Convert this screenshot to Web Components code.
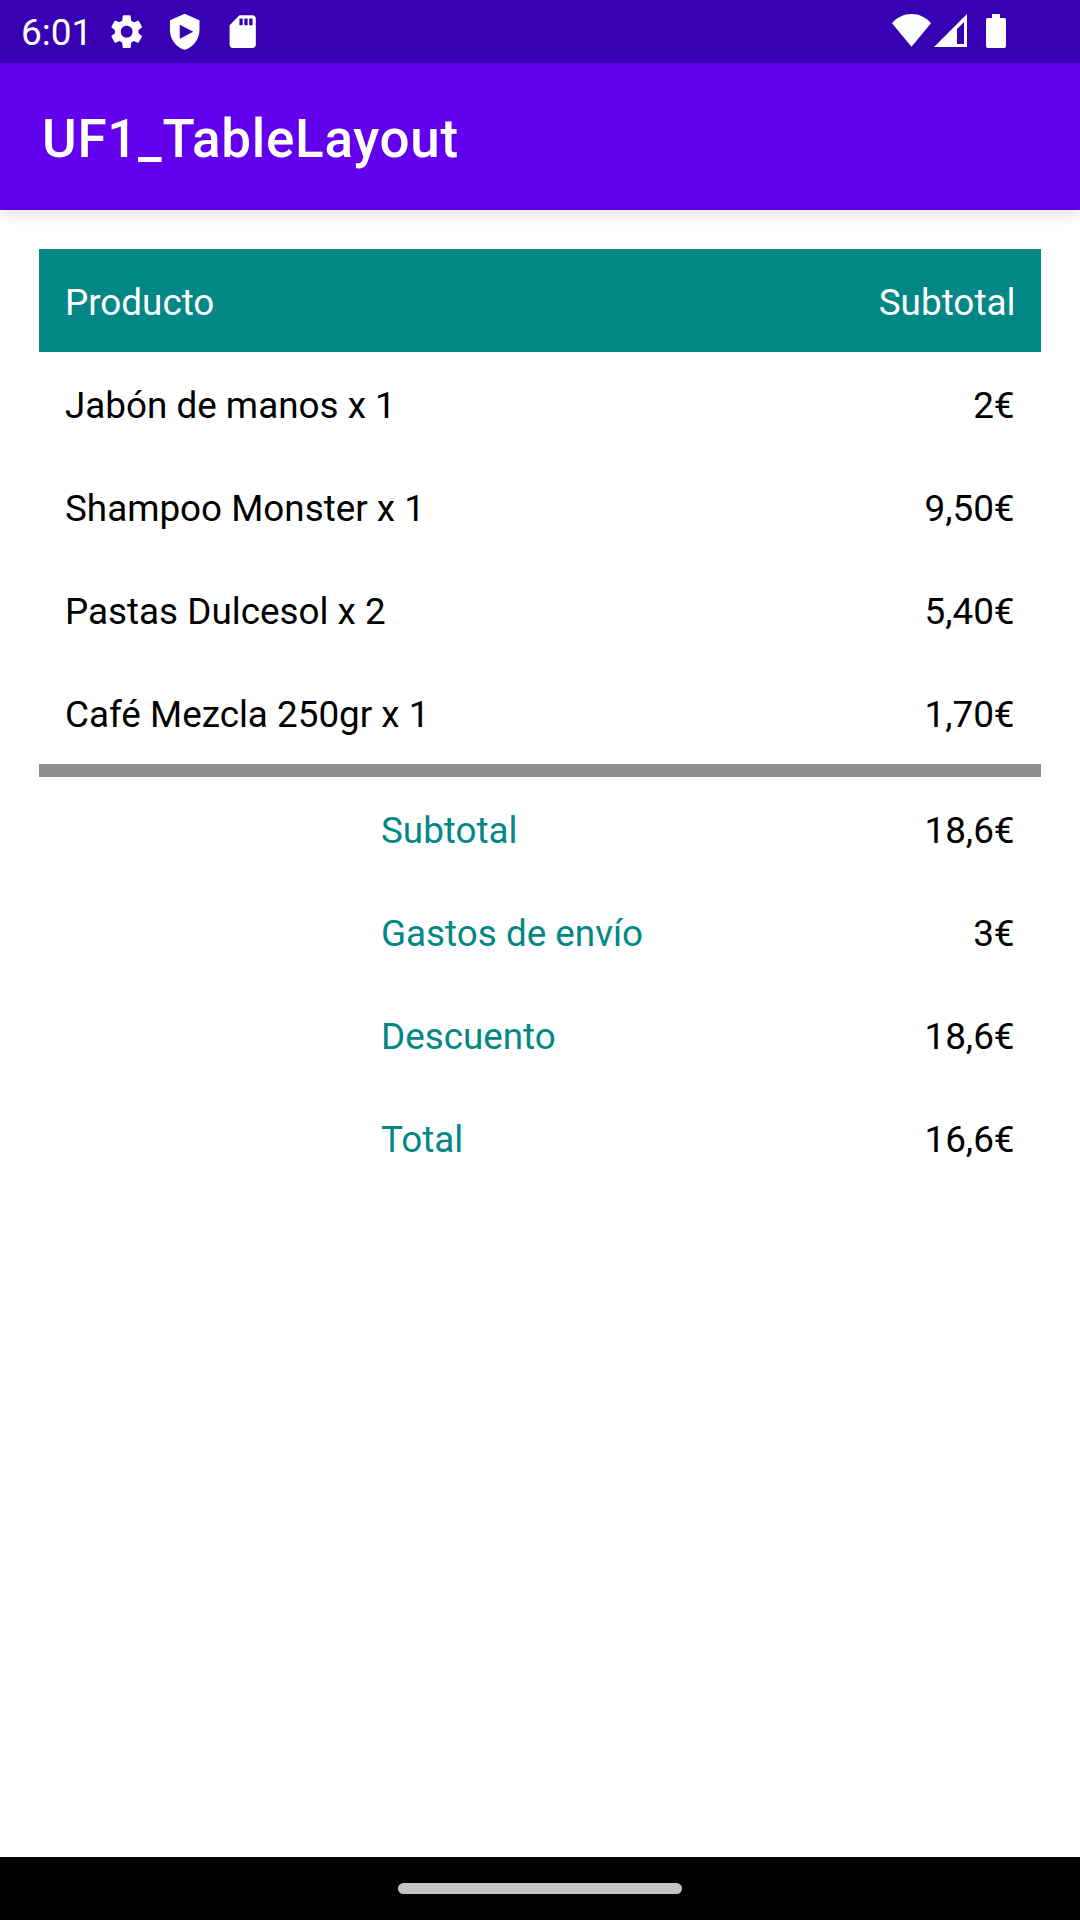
<!DOCTYPE html>
<html lang="es">
<head>
<meta charset="utf-8">
<title>UF1_TableLayout</title>
<style>
html, body { margin: 0; height: 100%; background: #fff; }
body { font-family: Roboto, "Noto Sans", sans-serif; overflow: hidden; }
</style>
</head>
<body>
<phone-screen>
  <status-bar slot="status">6:01</status-bar>
  <app-bar slot="bar">UF1_TableLayout</app-bar>
  <product-table>
    <table-row variant="head"><span>Producto</span><span slot="value">Subtotal</span></table-row>
    <table-row><span>Jabón de manos x 1</span><span slot="value">2€</span></table-row>
    <table-row><span>Shampoo Monster x 1</span><span slot="value">9,50€</span></table-row>
    <table-row><span>Pastas Dulcesol x 2</span><span slot="value">5,40€</span></table-row>
    <table-row><span>Café Mezcla 250gr x 1</span><span slot="value">1,70€</span></table-row>
    <table-divider></table-divider>
    <table-row variant="sum"><span>Subtotal</span><span slot="value">18,6€</span></table-row>
    <table-row variant="sum"><span>Gastos de envío</span><span slot="value">3€</span></table-row>
    <table-row variant="sum"><span>Descuento</span><span slot="value">18,6€</span></table-row>
    <table-row variant="sum"><span>Total</span><span slot="value">16,6€</span></table-row>
  </product-table>
  <nav-bar slot="nav"></nav-bar>
</phone-screen>
<script>
const define = (name, markup) => customElements.define(name, class extends HTMLElement {
  constructor() {
    super();
    this.attachShadow({ mode: "open" }).innerHTML = markup;
  }
});

define("phone-screen", `
<style>
:host { display: flex; flex-direction: column; width: 1080px; height: 1920px; background: #fff; }
main { flex: 1; padding: 39px; box-sizing: border-box; }
</style>
<slot name="status"></slot><slot name="bar"></slot>
<main><slot></slot></main>
<slot name="nav"></slot>`);

define("status-bar", `
<style>
:host { display: flex; justify-content: space-between; height: 63px; background: #3700b3; color: #fff; box-sizing: border-box; padding: 0 72px 0 21px; font-size: 37px; line-height: 66px; }
.left, .right { display: flex; align-items: flex-start; }
.time { width: 86.4px; }
.left svg { margin: 12px 18.6px 0 0; width: 39.4px; height: 39.4px; flex: none; }
.right svg { margin-top: 14px; flex: none; display: block; }
svg { fill: #fff; }
</style>
<div class="left">
  <span class="time"><slot></slot></span>
  <svg viewBox="0 0 24 24"><path d="M19.14 12.94c.04-.3.06-.61.06-.94 0-.32-.02-.64-.07-.94l2.03-1.58c.18-.14.23-.41.12-.61l-1.92-3.32c-.12-.22-.37-.29-.59-.22l-2.39.96c-.5-.38-1.03-.7-1.62-.94l-.36-2.94c-.04-.24-.24-.41-.48-.41h-3.84c-.24 0-.43.17-.47.41l-.36 2.94c-.59.24-1.13.57-1.62.94l-2.39-.96c-.22-.08-.47 0-.59.22L2.74 8.87c-.12.21-.08.47.12.61l2.03 1.58c-.05.3-.09.63-.09.94s.02.64.07.94l-2.03 1.58c-.18.14-.23.41-.12.61l1.92 3.32c.12.22.37.29.59.22l2.39-.96c.5.38 1.03.7 1.62.94l.36 2.94c.05.24.24.41.48.41h3.84c.24 0 .44-.17.47-.41l.36-2.94c.59-.24 1.13-.56 1.62-.94l2.39.96c.22.08.47 0 .59-.22l1.92-3.32c.12-.22.07-.47-.12-.61l-2.01-1.58zM12 15.6c-1.98 0-3.6-1.62-3.6-3.6s1.62-3.6 3.6-3.6 3.6 1.62 3.6 3.6-1.62 3.6-3.6 3.6z"/></svg>
  <svg viewBox="0 0 24 24"><path fill-rule="evenodd" d="M12 1 3 5v6c0 5.55 3.84 10.74 9 12 5.16-1.26 9-6.45 9-12V5l-9-4zM9 7.7 17.2 12 9 16.3z"/></svg>
  <svg viewBox="0 0 24 24"><path d="M18 2h-8L4.02 8 4 20c0 1.1.9 2 2 2h12c1.1 0 2-.9 2-2V4c0-1.1-.9-2-2-2zm-6 6h-2V4h2v4zm3 0h-2V4h2v4zm3 0h-2V4h2v4z"/></svg>
</div>
<div class="right">
  <svg width="39" height="33"><path d="M0 9.2C5 3.3 12 0 19.5 0S34 3.3 39 9.2L19.5 32.7z"/></svg>
  <svg width="33" height="33" style="margin-left:3px"><path fill-rule="evenodd" d="M33 0v33H0zM30 8l-7 7v15h7z"/></svg>
  <svg width="20" height="34" style="margin-left:19px;margin-right:2px"><path d="M6 0h8v4h4.500q1.500 0 1.500 1.500V32q0 2-2 2H2q-2 0-2-2V5.500Q0 4 1.500 4H6z"/></svg>
</div>`);

define("app-bar", `
<style>
:host { display: flex; align-items: center; height: 147px; box-sizing: border-box; padding: 4px 42px 0; background: #6200ee; color: #fff; font-size: 53px; font-weight: 500; letter-spacing: .0132em; box-shadow: 0 3px 16px rgba(0,0,0,.14); clip-path: inset(0 0 -30px 0); }
</style><slot></slot>`);

define("product-table", `
<style>
:host { display: flex; flex-direction: column; }
</style><slot></slot>`);

define("table-row", `
<style>
:host { display: flex; justify-content: space-between; align-items: center; height: 103px; box-sizing: border-box; padding: 3px 26.4px 0 26px; color: #000; font-size: 36.82px; white-space: nowrap; }
:host([variant="head"]) { background: #018786; color: #fff; padding-right: 25.500px; }
:host([variant="sum"]) { padding-left: 342px; }
:host([variant="sum"]) .name { color: #018786; }
.value { font-size: 36.9px; }
</style>
<span class="name"><slot></slot></span><span class="value"><slot name="value"></slot></span>`);

define("table-divider", `
<style>
:host { display: block; height: 13px; background: #909090; }
</style>`);

define("nav-bar", `
<style>
:host { display: flex; align-items: center; justify-content: center; height: 63px; background: #000; }
i { width: 284px; height: 11px; border-radius: 6px; background: #c4c4c4; }
</style><i></i>`);
</script>
</body>
</html>
